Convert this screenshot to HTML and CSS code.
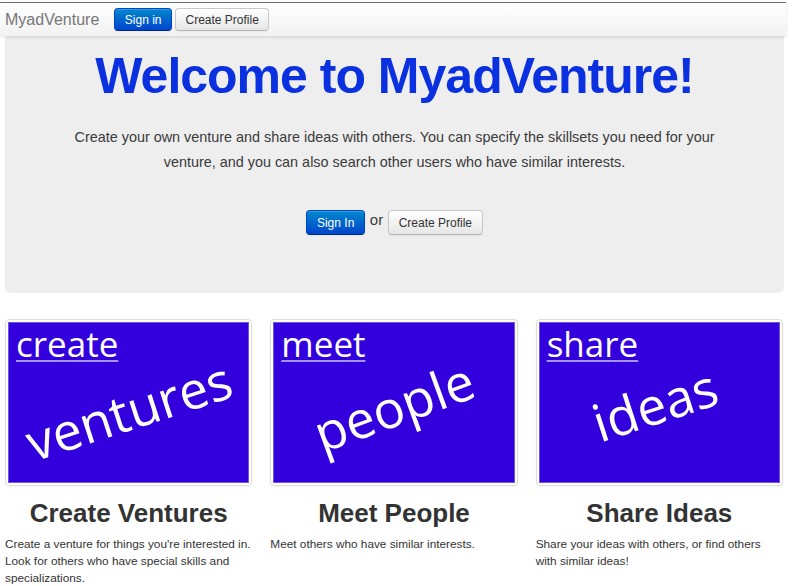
FILE: index.html
```html
<!DOCTYPE html>
<html lang="en">
<head>
  <meta charset="UTF-8">
  <title>MyadVenture</title>
  <link rel="stylesheet" href="styles.css">
</head>
<body>
  <div class="page">
    <div class="navbar">
      <a class="brand" href="#">MyadVenture</a>
      <button class="btn btn-primary">Sign in</button>
      <button class="btn">Create Profile</button>
    </div>

    <div class="hero">
      <h1>Welcome to MyadVenture!</h1>
      <p>Create your own venture and share ideas with others. You can specify the skillsets you need for your venture, and you can also search other users who have similar interests.</p>
      <div class="hero-actions">
        <button class="btn btn-primary btn-large">Sign In</button>
        <span class="or">or</span>
        <button class="btn btn-large">Create Profile</button>
      </div>
    </div>

    <div class="features">
      <div class="feature">
        <div class="thumbnail">
          <div class="pic">
            <span class="pic-label">create</span>
            <span class="pic-word word-ventures">ventures</span>
          </div>
        </div>
        <h2>Create Ventures</h2>
        <p>Create a venture for things you're interested in. Look for others who have special skills and specializations.</p>
      </div>

      <div class="feature">
        <div class="thumbnail">
          <div class="pic">
            <span class="pic-label">meet</span>
            <span class="pic-word word-people">people</span>
          </div>
        </div>
        <h2>Meet People</h2>
        <p>Meet others who have similar interests.</p>
      </div>

      <div class="feature">
        <div class="thumbnail">
          <div class="pic">
            <span class="pic-label">share</span>
            <span class="pic-word word-ideas">ideas</span>
          </div>
        </div>
        <h2>Share Ideas</h2>
        <p>Share your ideas with others, or find others with similar ideas!</p>
      </div>
    </div>
  </div>
</body>
</html>
```

FILE: styles.css
```css
body {
  margin: 0;
  background: #ffffff;
  font-family: 'Liberation Sans', Arial, sans-serif;
  color: #333333;
}

.page {
  width: 786px;
  padding-top: 2px;
}

/* top bar */
.navbar {
  display: flex;
  align-items: center;
  gap: 3px;
  height: 33px;
  padding-left: 5px;
  border-top: 1px solid #6f6f6f;
  background: linear-gradient(#ffffff, #f2f2f2);
  box-shadow: 0 1px 3px rgba(0, 0, 0, 0.12);
  position: relative;
  z-index: 1;
}

.brand {
  font-size: 16px;
  color: #777777;
  text-decoration: none;
  margin-right: 12px;
}

.btn {
  font-family: 'Liberation Sans', Arial, sans-serif;
  font-size: 12px;
  height: 23px;
  padding: 0 9.5px;
  color: #333333;
  background: linear-gradient(#ffffff, #e6e6e6);
  border: 1px solid #c8c8c8;
  border-bottom-color: #b3b3b3;
  border-radius: 4px;
  box-shadow: inset 0 1px 0 rgba(255, 255, 255, 0.2), 0 1px 2px rgba(0, 0, 0, 0.05);
  cursor: pointer;
}

.btn-primary {
  color: #ffffff;
  background: linear-gradient(#0088cc, #0044cc);
  border-color: #0044cc #0044cc #002a80;
}

.btn-large {
  height: 25px;
}

/* hero */
.hero {
  margin: 0 2px 0 5px;
  padding: 15px 50px 58px;
  background: #eeeeee;
  border-radius: 0 0 6px 6px;
  text-align: center;
}

.hero h1 {
  margin: 0 0 24px;
  font-size: 50px;
  line-height: 1;
  letter-spacing: -1px;
  font-weight: bold;
  color: #0a30e0;
}

.hero p {
  margin: 0 0 35px;
  font-size: 14.4px;
  line-height: 25px;
  color: #3a3a3a;
}

.hero-actions {
  display: flex;
  justify-content: center;
  align-items: center;
  gap: 5px;
}

.or {
  font-size: 15px;
  color: #3a3a3a;
  margin-top: -6px;
}

/* feature columns */
.features {
  display: grid;
  grid-template-columns: repeat(3, 1fr);
  gap: 18px;
  margin: 26px 3px 0 5px;
}

.thumbnail {
  padding: 2px;
  border: 1px solid #dddddd;
  border-radius: 4px;
  box-shadow: 0 1px 3px rgba(0, 0, 0, 0.055);
}

.pic {
  position: relative;
  height: 159px;
  background: #3300dd;
  border: 1px solid #6f55e6;
  color: #ffffff;
  font-family: 'Open Sans', sans-serif;
}

.pic-label {
  display: inline-block;
  margin: 0 0 0 7px;
  font-size: 35px;
  line-height: 1.2;
  text-decoration: underline;
  text-decoration-color: #a393f2;
  text-decoration-thickness: 2px;
  text-underline-offset: 3px;
}

.pic-word {
  position: absolute;
  top: 40px;
  left: 0;
  right: 0;
  bottom: 0;
  display: flex;
  align-items: center;
  justify-content: center;
  font-size: 52px;
  line-height: 1.2;
}

.word-ventures {
  transform: translate(0, -12px) rotate(-18deg);
}

.word-people {
  transform: translate(0, -16px) rotate(-20deg);
}

.word-ideas {
  transform: translate(-5px, -18px) rotate(-18deg);
}

.feature h2 {
  margin: 12px 0 8px;
  font-size: 26px;
  line-height: 30px;
  text-align: center;
  color: #333333;
}

.feature p {
  margin: 0;
  font-size: 11.8px;
  line-height: 17px;
  color: #333333;
}
```
